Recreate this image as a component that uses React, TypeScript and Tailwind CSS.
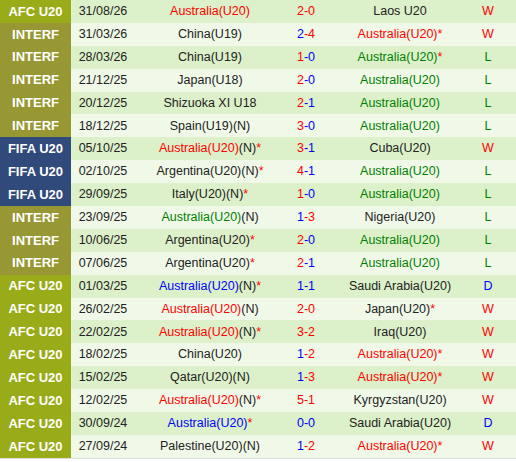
import React from 'react';

type Part = { t: string; c?: 'r' | 'g' | 'b' | 'd' };

type Match = {
    comp: 'AFC' | 'INTERF' | 'FIFA';
    date: string;
    home: Part[];
    score: Part[];
    away: Part[];
    res: 'W' | 'L' | 'D';
};

const AU = 'Australia(U20)';
const star: Part = { t: '*', c: 'r' };
const n: Part = { t: '(N)' };

const matches: Match[] = [
    { comp: 'AFC', date: '31/08/26', home: [{ t: AU, c: 'r' }], score: [{ t: '2-0', c: 'r' }], away: [{ t: 'Laos U20' }], res: 'W' },
    { comp: 'INTERF', date: '31/03/26', home: [{ t: 'China(U19)' }], score: [{ t: '2', c: 'b' }, { t: '-4', c: 'r' }], away: [{ t: AU, c: 'r' }, star], res: 'W' },
    { comp: 'INTERF', date: '28/03/26', home: [{ t: 'China(U19)' }], score: [{ t: '1', c: 'r' }, { t: '-0', c: 'b' }], away: [{ t: AU, c: 'g' }, star], res: 'L' },
    { comp: 'INTERF', date: '21/12/25', home: [{ t: 'Japan(U18)' }], score: [{ t: '2', c: 'r' }, { t: '-0', c: 'b' }], away: [{ t: AU, c: 'g' }], res: 'L' },
    { comp: 'INTERF', date: '20/12/25', home: [{ t: 'Shizuoka XI U18' }], score: [{ t: '2', c: 'r' }, { t: '-1', c: 'b' }], away: [{ t: AU, c: 'g' }], res: 'L' },
    { comp: 'INTERF', date: '18/12/25', home: [{ t: 'Spain(U19)(N)' }], score: [{ t: '3', c: 'r' }, { t: '-0', c: 'b' }], away: [{ t: AU, c: 'g' }], res: 'L' },
    { comp: 'FIFA', date: '05/10/25', home: [{ t: AU, c: 'r' }, n, star], score: [{ t: '3', c: 'r' }, { t: '-1', c: 'b' }], away: [{ t: 'Cuba(U20)' }], res: 'W' },
    { comp: 'FIFA', date: '02/10/25', home: [{ t: 'Argentina(U20)(N)' }, star], score: [{ t: '4', c: 'r' }, { t: '-1', c: 'b' }], away: [{ t: AU, c: 'g' }], res: 'L' },
    { comp: 'FIFA', date: '29/09/25', home: [{ t: 'Italy(U20)(N)' }, star], score: [{ t: '1', c: 'r' }, { t: '-0', c: 'b' }], away: [{ t: AU, c: 'g' }], res: 'L' },
    { comp: 'INTERF', date: '23/09/25', home: [{ t: AU, c: 'g' }, n], score: [{ t: '1', c: 'b' }, { t: '-3', c: 'r' }], away: [{ t: 'Nigeria(U20)' }], res: 'L' },
    { comp: 'INTERF', date: '10/06/25', home: [{ t: 'Argentina(U20)' }, star], score: [{ t: '2', c: 'r' }, { t: '-0', c: 'b' }], away: [{ t: AU, c: 'g' }], res: 'L' },
    { comp: 'INTERF', date: '07/06/25', home: [{ t: 'Argentina(U20)' }, star], score: [{ t: '2', c: 'r' }, { t: '-1', c: 'b' }], away: [{ t: AU, c: 'g' }], res: 'L' },
    { comp: 'AFC', date: '01/03/25', home: [{ t: AU, c: 'b' }, n, star], score: [{ t: '1-1', c: 'b' }], away: [{ t: 'Saudi Arabia(U20)' }], res: 'D' },
    { comp: 'AFC', date: '26/02/25', home: [{ t: AU, c: 'r' }, n], score: [{ t: '2-0', c: 'r' }], away: [{ t: 'Japan(U20)' }, star], res: 'W' },
    { comp: 'AFC', date: '22/02/25', home: [{ t: AU, c: 'r' }, n, star], score: [{ t: '3-2', c: 'r' }], away: [{ t: 'Iraq(U20)' }], res: 'W' },
    { comp: 'AFC', date: '18/02/25', home: [{ t: 'China(U20)' }], score: [{ t: '1', c: 'b' }, { t: '-2', c: 'r' }], away: [{ t: AU, c: 'r' }, star], res: 'W' },
    { comp: 'AFC', date: '15/02/25', home: [{ t: 'Qatar(U20)(N)' }], score: [{ t: '1', c: 'b' }, { t: '-3', c: 'r' }], away: [{ t: AU, c: 'r' }, star], res: 'W' },
    { comp: 'AFC', date: '12/02/25', home: [{ t: AU, c: 'r' }, n, star], score: [{ t: '5-1', c: 'r' }], away: [{ t: 'Kyrgyzstan(U20)' }], res: 'W' },
    { comp: 'AFC', date: '30/09/24', home: [{ t: AU, c: 'b' }, star], score: [{ t: '0-0', c: 'b' }], away: [{ t: 'Saudi Arabia(U20)' }], res: 'D' },
    { comp: 'AFC', date: '27/09/24', home: [{ t: 'Palestine(U20)(N)' }], score: [{ t: '1', c: 'b' }, { t: '-2', c: 'r' }], away: [{ t: AU, c: 'r' }, star], res: 'W' },
];

const compLabel = { AFC: 'AFC U20', INTERF: 'INTERF', FIFA: 'FIFA U20' };
const compBg = { AFC: 'bg-[#9aab19]', INTERF: 'bg-[#979833]', FIFA: 'bg-[#2f4a7b]' };
const colour = { r: 'text-[#ff0000]', g: 'text-[#008000]', b: 'text-[#0000ff]', d: 'text-[#222222]' };
const resColour = { W: 'text-[#ff0000]', L: 'text-[#008000]', D: 'text-[#0000ff]' };

const Parts = ({ parts }: { parts: Part[] }) => (
    <>
        {parts.map((p, i) => (
            <span key={i} className={colour[p.c ?? 'd']}>
                {p.t}
            </span>
        ))}
    </>
);

const App = () => {
    return (
        <div
            className="w-[516px] bg-white text-[12.5px] text-[#222222]"
            style={{ fontFamily: "'Liberation Sans', Arial, sans-serif" }}
        >
            <div className="border-b border-[#dddddd]">
                {matches.map((m, i) => (
                    <div
                        key={i}
                        className={`flex h-[22.9px] items-center whitespace-nowrap ${
                            i % 2 === 0 ? 'bg-[#dcf1c9]' : 'bg-[#f0f9e8]'
                        }`}
                    >
                        <div
                            className={`flex h-full w-[71px] shrink-0 items-center justify-center text-[13px] font-bold text-white ${compBg[m.comp]}`}
                        >
                            {compLabel[m.comp]}
                        </div>
                        <div className="flex w-[64px] shrink-0 justify-center">{m.date}</div>
                        <div className="flex w-[150px] shrink-0 justify-center">
                            <Parts parts={m.home} />
                        </div>
                        <div className="flex w-[42px] shrink-0 justify-center">
                            <Parts parts={m.score} />
                        </div>
                        <div className="flex w-[146px] shrink-0 justify-center">
                            <Parts parts={m.away} />
                        </div>
                        <div className={`flex w-[30px] shrink-0 justify-center ${resColour[m.res]}`}>{m.res}</div>
                        <div className="flex-1" />
                    </div>
                ))}
            </div>
        </div>
    );
};

export default App;
